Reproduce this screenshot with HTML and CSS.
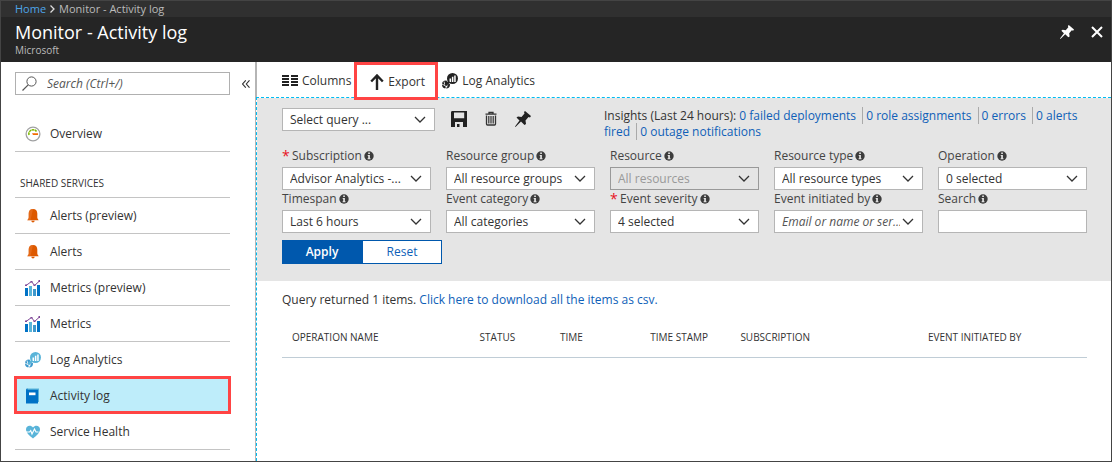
FILE: index.html
```html
<!DOCTYPE html>
<html lang="en">
<head>
<meta charset="utf-8">
<title>Monitor - Activity log</title>
<link rel="stylesheet" href="styles.css">
</head>
<body>
<svg class="sprite" aria-hidden="true">
  <symbol id="pin" viewBox="0 0 16 16"><path fill="currentColor" d="M10 0 16 5 15 6.500 13.500 6 10.500 9.500 11 13 9.500 14 6 10.500 0.500 16 0 15.500 4.500 9.500 1.500 6.500 3 5.500 6.500 6 9.500 2.500 9 1z"/></symbol>
  <symbol id="info" viewBox="0 0 10 10"><circle cx="5" cy="5" r="4.700" fill="#3c3c3c"/><path fill="#e5e5e5" d="M4.200 1.500h1.700v1.400H4.200zM3.700 3.900h2.200v3.300h.6v1H3.600v-1h.6V4.900h-.5z"/></symbol>
  <symbol id="bell" viewBox="0 0 12 14"><path fill="#dd5900" d="M6 0c3 0 4.300 1.900 4.300 4.600v3.600c0 1.400.7 1.900 1.400 3H.3c.7-1.100 1.400-1.600 1.400-3V4.600C1.700 1.900 3 0 6 0zM4.300 11.800h3.400C7.500 13 6.900 13.400 6 13.400S4.500 13 4.300 11.800z"/><path fill="#eb7a2d" d="M6 0C3 0 1.700 1.900 1.700 4.600v3.600c0 1.400-.7 1.900-1.400 3h3.200z" opacity=".5"/></symbol>
  <symbol id="metrics" viewBox="0 0 16 16"><path fill="#0072c6" d="M0 8h3v8H0zM12 5h3v11h-3z"/><path fill="#59b4d9" d="M4 6h3v10H4z"/><path fill="#3e98cc" d="M8 9h3v7H8z"/><path fill="none" stroke="#804998" stroke-width="1" d="M1 5.500 6.500 1.500 9.500 5.500 14.500 1"/><path fill="#804998" d="M0 4.500h2v1.500H0zM5.500 1h2v1.500h-2zM8.500 4.500h2V6h-2zM13.500 0h1.500v2h-1.500z"/></symbol>
  <symbol id="analytics" viewBox="0 0 16 16"><circle cx="4" cy="11.500" r="4" fill="var(--back)"/><path stroke="var(--cut)" stroke-width=".8" fill="none" d="M0 11 4.500 13.500 6.500 10M4.500 13.500 3.500 16M2 8.500l1 4"/><circle cx="4.500" cy="13.400" r=".9" fill="var(--cut)"/><circle cx="10.400" cy="5.600" r="6.100" fill="var(--cut)"/><circle cx="10.500" cy="5.500" r="5.500" fill="var(--front)"/><path fill="var(--cut)" d="M7.500 5.500h1.600v3.400H7.500zM9.900 3.800h1.500v5.100H9.900zM12.200 2.400h1.500v6.500h-1.500z"/><path stroke="var(--front)" stroke-width="2.400" stroke-linecap="round" d="M6.500 9.300 4 11.500"/></symbol>
</svg>
<div class="portal">
  <nav class="crumbs" aria-label="Breadcrumb"><a href="#">Home</a>
    <svg width="5" height="8" viewBox="0 0 5 8"><path d="M.5.5 4 4 .5 7.500" fill="none" stroke="#ddd" stroke-width="1.300"/></svg>
    <span>Monitor - Activity log</span></nav>
  <header class="titlebar">
    <div class="titles"><h1>Monitor - Activity log</h1><p>Microsoft</p></div>
    <button class="plain" aria-label="Pin"><svg width="14" height="14"><use href="#pin"/></svg></button>
    <button class="plain" aria-label="Close"><svg width="12" height="12" viewBox="0 0 12 12"><path d="m1 1 10 10M11 1 1 11" stroke="#fff" stroke-width="2"/></svg></button>
  </header>
  <div class="body">
    <aside class="side">
      <div class="side-top">
        <label class="search"><svg width="15" height="15" viewBox="0 0 15 15"><circle cx="9.500" cy="5.500" r="4.600" fill="none" stroke="#555"/><path d="M6.200 8.800.5 14.500" stroke="#555" stroke-width="1.200"/></svg><input type="search" placeholder="Search (Ctrl+/)" aria-label="Search"></label>
        <button class="plain" aria-label="Collapse menu"><svg width="8" height="8" viewBox="0 0 8 8"><path d="M3.800.3.600 4l3.200 3.700M7.500.3 4.300 4l3.200 3.700" fill="none" stroke="#333" stroke-width="1.100"/></svg></button>
      </div>
      <nav class="menu">
        <a href="#"><svg width="16" height="16" viewBox="0 0 16 16"><circle cx="8" cy="8" r="6.900" fill="#fff" stroke="#a0a1a2" stroke-width="1.300"/><path d="M4 9a4.200 4.200 0 0 1 7.500-3.500" fill="none" stroke="#7fba00" stroke-width="1.600" stroke-dasharray="2.600 .5"/><path d="M7 7.300H13a5 5 0 0 1 0 1.700H8z" fill="#f26a00"/></svg>Overview</a>
        <h2>SHARED SERVICES</h2>
        <a href="#"><svg width="16" height="14"><use href="#bell"/></svg>Alerts (preview)</a>
        <a href="#"><svg width="16" height="14"><use href="#bell"/></svg>Alerts</a>
        <a href="#"><svg width="16" height="16"><use href="#metrics"/></svg>Metrics (preview)</a>
        <a href="#"><svg width="16" height="16"><use href="#metrics"/></svg>Metrics</a>
        <a href="#"><svg class="blue" width="16" height="16"><use href="#analytics"/></svg>Log Analytics</a>
        <a href="#" class="current" aria-current="page"><svg width="16" height="16" viewBox="0 0 16 16"><path fill="#59b4d9" d="M1.500.5H14V14H1.500z"/><path fill="#0072c6" d="M1 2.500C1 1.200 1.500.5 2.500.5v1.300H13V15.500H1z"/><path fill="#fff" d="M4 4.500h6.500v2.700H4z"/></svg>Activity log</a>
        <a href="#"><svg width="16" height="16" viewBox="0 0 16 16"><path fill="#59b4d9" d="M8 14.500C4 11.500 1 8.500 1 5.300 1 1.200 6 .5 8 3.500c2-3 7-2.300 7 1.800 0 3.200-3 6.200-7 9.200z"/><path fill="none" stroke="#fff" stroke-width="1.100" d="M0 8h4.500l1.200-1.500L7 10l2.500-5L11 8h2.500"/></svg>Service Health</a>
      </nav>
    </aside>
    <main class="main">
      <div class="toolbar">
        <button class="tool"><svg width="16" height="11" viewBox="0 0 16 11"><path fill="#222" d="M0 0h7v2H0zM0 3h7v2H0zM0 6h7v2H0zM0 9h7v2H0zM9 0h7v2H9zM9 3h7v2H9zM9 6h7v2H9zM9 9h7v2H9z"/></svg>Columns</button>
        <button class="tool marked"><svg width="14" height="16" viewBox="0 0 14 16"><path d="M7 16V2M1.200 7.500 7 1.500l5.800 6" fill="none" stroke="#222" stroke-width="2.400"/></svg>Export</button>
        <button class="tool"><svg class="dark" width="16" height="16"><use href="#analytics"/></svg>Log Analytics</button>
      </div>
      <div class="content">
        <form class="filters">
          <div class="query">
            <select class="box saved" aria-label="Saved query"><option>Select query ...</option></select>
            <button type="button" class="plain" aria-label="Save"><svg width="16" height="16" viewBox="0 0 16 16"><path fill="#222" fill-rule="evenodd" d="M0 1.500C0 .5.500 0 1.500 0H16v16H0zM3 1.500v5.700h10.200V1.500zM4 11v5h2v-3h2.500v3H12v-5z"/></svg></button>
            <button type="button" class="plain" aria-label="Delete"><svg width="16" height="16" viewBox="0 0 16 16"><path fill="none" stroke="#333" stroke-width="1.300" d="M3.500 4.500V13q0 1 1 1h7q1 0 1-1V4.500M2.500 3.200h11M6 3V1.500h4V3"/><path stroke="#333" stroke-width="1.200" d="M5.800 5v7.500M8 5v7.500M10.200 5v7.500"/></svg></button>
            <button type="button" class="plain" aria-label="Pin query"><svg width="16" height="16"><use href="#pin"/></svg></button>
            <p class="insights"><span>Insights (Last 24 hours):</span> <a href="#">0 failed deployments</a> <a href="#" class="split">0 role assignments</a> <a href="#" class="split">0 errors</a> <a href="#" class="split">0 alerts fired</a> <a href="#" class="split">0 outage notifications</a></p>
          </div>
          <div class="grid">
            <label><span class="name"><b>*</b>Subscription <svg width="10" height="10"><use href="#info"/></svg></span><select class="box"><option>Advisor Analytics -...</option></select></label>
            <label><span class="name">Resource group <svg width="10" height="10"><use href="#info"/></svg></span><select class="box"><option>All resource groups</option></select></label>
            <label><span class="name">Resource <svg width="10" height="10"><use href="#info"/></svg></span><select class="box" disabled><option>All resources</option></select></label>
            <label><span class="name">Resource type <svg width="10" height="10"><use href="#info"/></svg></span><select class="box"><option>All resource types</option></select></label>
            <label><span class="name">Operation <svg width="10" height="10"><use href="#info"/></svg></span><select class="box"><option>0 selected</option></select></label>
            <label><span class="name">Timespan <svg width="10" height="10"><use href="#info"/></svg></span><select class="box"><option>Last 6 hours</option></select></label>
            <label><span class="name">Event category <svg width="10" height="10"><use href="#info"/></svg></span><select class="box"><option>All categories</option></select></label>
            <label><span class="name"><b>*</b>Event severity <svg width="10" height="10"><use href="#info"/></svg></span><select class="box"><option>4 selected</option></select></label>
            <label><span class="name">Event initiated by <svg width="10" height="10"><use href="#info"/></svg></span><select class="box hint"><option>Email or name or ser...</option></select></label>
            <label><span class="name">Search <svg width="10" height="10"><use href="#info"/></svg></span><input class="box text" type="text"></label>
          </div>
          <div class="actions"><button type="button" class="apply">Apply</button><button type="button" class="reset">Reset</button></div>
        </form>
        <section class="results">
          <p>Query returned 1 items. <a href="#">Click here to download all the items as csv.</a></p>
          <table>
            <thead><tr><th class="wide">OPERATION NAME</th><th class="slim">STATUS</th><th class="mid">TIME</th><th class="mid">TIME STAMP</th><th class="wide">SUBSCRIPTION</th><th>EVENT INITIATED BY</th></tr></thead>
          </table>
        </section>
      </div>
    </main>
  </div>
</div>
</body>
</html>
```
FILE: styles.css
```css
* { box-sizing: border-box; }
body { margin: 0; font: 12px/16px "Open Sans", "Noto Sans", sans-serif; color: #333; background: #fff; }
h1, h2, p { margin: 0; font-weight: 400; }
a { color: #0f5fb8; text-decoration: none; }
svg { flex: none; display: block; }
button, input, select { font: inherit; color: inherit; }
.sprite { position: absolute; width: 0; height: 0; }
.plain { border: 0; padding: 0; background: none; display: flex; color: #222; }
.portal { min-height: 100vh; display: flex; flex-direction: column; border: 1px solid #444; }

.crumbs { display: flex; align-items: center; gap: 4px; height: 16px; padding-left: 14px; background: #303030; color: #bbb; font-size: 11px; }
.crumbs a { color: #4ea6ea; }
.titlebar { display: flex; gap: 17px; height: 45px; padding: 5px 8px 0 14px; background: #252525; color: #fff; }
.titles { flex: 1; }
.titlebar h1 { font-size: 18px; line-height: 20px; }
.titlebar p { font-size: 10px; line-height: 16px; color: #bbb; }
.titlebar .plain { height: 20px; align-items: center; color: #fff; }

.body { flex: 1; display: flex; }
.side { flex: none; width: 254px; padding: 10px 5px 0 14px; }
.side-top { display: flex; align-items: center; gap: 12px; margin-bottom: 21px; }
.search { display: flex; align-items: center; gap: 10px; width: 215px; height: 23px; padding-left: 6px; border: 1px solid #b0b0b0; }
.search input { flex: 1; min-width: 0; border: 0; padding: 0; outline: 0; background: none; }
.search input::placeholder { color: #555; font-style: italic; opacity: 1; }
.menu { width: 215px; }
.menu a { display: flex; align-items: center; gap: 9px; height: 36px; padding-left: 10px; border-bottom: 1px solid #c4c4c4; color: #333; }
.menu h2 { height: 46px; padding: 23px 5px 0; border-bottom: 1px solid #c4c4c4; font-size: 10px; line-height: 16px; color: #333; }
.menu .current { height: 38px; margin: -2px -1px 0; padding: 2px 0 0 8px; border: 3px solid #f44; background: #beedfa; }
.blue { --front: #59b4d9; --back: #3e98cc; --cut: #fff; }
.dark { --front: #222; --back: #222; --cut: #fff; }

.main { flex: 1; min-width: 0; display: flex; flex-direction: column; border-left: 1px solid #b5b5b5; }
.toolbar { display: flex; align-items: center; height: 35px; padding-left: 25px; border-left: 1px solid #b5b5b5; gap: 4px; }
.tool { display: flex; align-items: center; gap: 4px; padding: 2px 0 0; border: 0; background: none; height: 38px; }
.marked { position: relative; width: 84px; margin: 0 0 -3px -1px; padding-left: 13px; border: 3px solid #f44; }
.content { flex: 1; border: 1px dashed #00bcf2; border-width: 1px 0 0 1px; }

.filters { padding: 10px 24px 17px 25px; background: #e5e5e5; }
.query { display: flex; align-items: flex-start; min-height: 34px; margin-bottom: 5px; }
.query .plain { margin: 3px 0 0 16px; }
.box { display: block; width: 100%; height: 23px; padding: 0 22px 0 7px; border: 1px solid #b5b5b5; border-radius: 0; outline: 0; appearance: none; background: #fff url("data:image/svg+xml,%3Csvg xmlns='http://www.w3.org/2000/svg' width='12' height='8'%3E%3Cpath d='M1 1l5 5 5-5' fill='none' stroke='%23333' stroke-width='1.300'/%3E%3C/svg%3E") no-repeat right 8px center; text-overflow: clip; }
.box:disabled { background-color: #e5e5e5; border-color: #999; color: #999; opacity: 1; }
.box.text { background-image: none; padding-right: 6px; }
.box.hint { font-style: italic; color: #555; }
.box.saved { width: 153px; }
.insights { flex: 1; margin-left: 73px; }
.split { margin-left: 3px; padding-left: 3px; border-left: 1px solid #aaa; }
.grid { display: grid; grid-template-columns: repeat(5, 1fr); gap: 0 15px; }
.name { display: flex; align-items: center; gap: 2px; height: 20px; padding-bottom: 2px; color: #444; }
.name b { width: 8px; color: #e81123; font-size: 14px; font-weight: 400; }
.actions { display: flex; width: 160px; height: 24px; margin-top: 7px; }
.actions button { flex: 1; padding: 0; border: 1px solid #0058ad; }
.apply { background: #0058ad; color: #fff; font-weight: 600; }
.reset { background: #fff; color: #0f5fb8; }

.results { padding: 11px 24px 0 25px; }
table { width: 100%; margin-top: 9px; border-collapse: collapse; table-layout: fixed; border-bottom: 1px solid #c0cdd6; }
th { height: 40px; padding: 0 0 0 10px; font-size: 10px; font-weight: 400; text-align: left; white-space: nowrap; }
.wide { width: 23.300%; }
.slim { width: 10%; }
.mid { width: 11.200%; }
```
